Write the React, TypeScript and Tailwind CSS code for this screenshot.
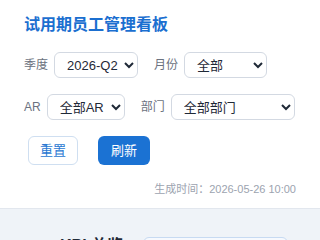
import React, { useState } from "react";

const font = { fontFamily: '"Liberation Sans", "Noto Sans CJK SC", sans-serif' };

interface FilterProps {
    label: string;
    value: string;
    options: string[];
    width: string;
    onChange: (v: string) => void;
}

function Filter({ label, value, options, width, onChange }: FilterProps) {
    return (
        <label className="flex items-center gap-[6px] text-xs text-[#6b7280]">
            {label}
            <select
                value={value}
                onChange={(e) => onChange(e.target.value)}
                className={`h-[26px] ${width} rounded-md border border-[#d3d9e2] bg-white pl-2 text-[13px] text-[#1f2937]`}
            >
                {options.map((o) => (
                    <option key={o}>{o}</option>
                ))}
            </select>
        </label>
    );
}

export default function App() {
    const [quarter, setQuarter] = useState("2026-Q2");
    const [month, setMonth] = useState("全部");
    const [ar, setAr] = useState("全部AR");
    const [dept, setDept] = useState("全部部门");

    return (
        <div className="min-h-screen bg-[#eff3f8]" style={font}>
            <header className="bg-white border-b border-[#e2e7ee] px-6 pt-[13px] pb-[10px]">
                <h1 className="text-base font-bold leading-6 text-[#1b6fd0]">试用期员工管理看板</h1>

                <div className="mt-[15px] flex flex-wrap items-center gap-x-4 gap-y-4">
                    <Filter label="季度" value={quarter} onChange={setQuarter} width="w-[84px]" options={["2026-Q1", "2026-Q2", "2026-Q3"]} />
                    <Filter label="月份" value={month} onChange={setMonth} width="w-[83px]" options={["全部", "4月", "5月", "6月"]} />
                    <Filter label="AR" value={ar} onChange={setAr} width="w-[78px]" options={["全部AR"]} />
                    <Filter label="部门" value={dept} onChange={setDept} width="w-[124px]" options={["全部部门"]} />
                </div>

                <div className="mt-4 flex gap-5 pl-1">
                    <button
                        onClick={() => {
                            setQuarter("2026-Q2");
                            setMonth("全部");
                            setAr("全部AR");
                            setDept("全部部门");
                        }}
                        className="h-[29px] w-[50px] rounded-md border border-[#cfdff1] bg-white text-[13px] text-[#2a78d2]"
                    >
                        重置
                    </button>
                    <button className="h-[29px] w-[52px] rounded-md bg-[#1b72d3] text-[13px] text-white">刷新</button>
                </div>

                <div className="mt-4 text-right text-[11px] text-[#9ca3af]">生成时间：2026-05-26 10:00</div>
            </header>

            <section className="flex items-start pl-[60px] pr-8 pt-[25px]">
                <h2 className="text-base font-bold text-[#1f2937]">KPI 总览</h2>
                <div className="ml-auto mt-[3px] h-10 w-[145px] rounded-md border border-[#c7daf2] bg-[#f6f9fe]" />
            </section>
        </div>
    );
}
